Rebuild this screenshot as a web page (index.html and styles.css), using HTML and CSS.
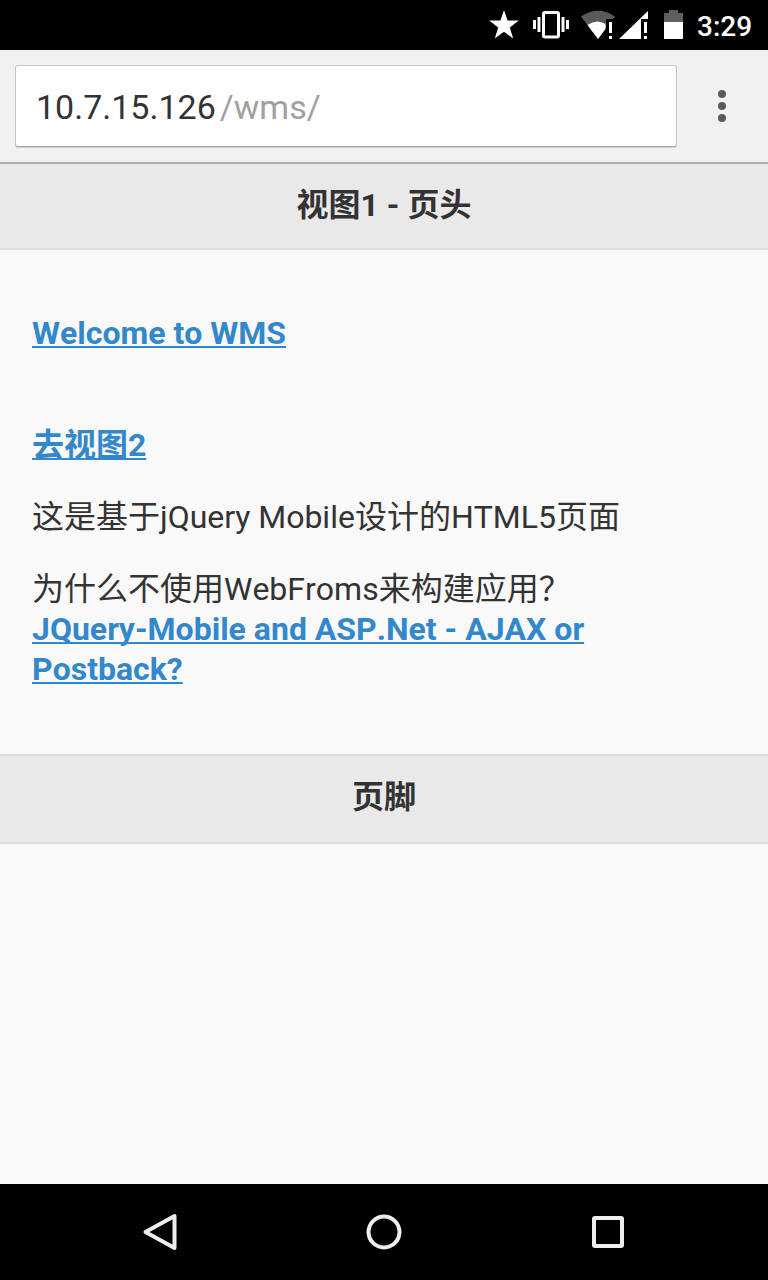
FILE: index.html
```html
<!DOCTYPE html>
<html lang="zh-CN">
<head>
<meta charset="UTF-8">
<meta name="viewport" content="width=device-width, initial-scale=1.0">
<title>WMS</title>
<link rel="stylesheet" href="styles.css">
</head>
<body>

<div class="status-bar">
  <svg class="star" width="30" height="30" viewBox="0 0 30 30">
    <path d="M15 0L18.6 10.6H29.8L20.8 17.4L24.2 28.6L15 21.8L5.8 28.6L9.2 17.4L0.2 10.6H11.4Z" fill="#fff"/>
  </svg>
  <svg class="vibrate" width="36" height="30" viewBox="0 0 36 30">
    <rect x="10.5" y="2.5" width="15" height="24.5" rx="1.5" fill="none" stroke="#fff" stroke-width="3"/>
    <path d="M0 10h3v9H0zM4.5 7h3v15h-3zM28.5 7h3v15h-3zM33 10h3v9h-3z" fill="#fff"/>
  </svg>
  <svg class="wifi" width="34" height="30" viewBox="0 0 34 30">
    <path d="M0 6.500Q17 -5 34 6.500L32 9H25V18L17 29Z" fill="#5a5a5a"/>
    <path d="M6.500 15Q15.500 8.500 24.500 14V19L17 29Z" fill="#fff"/>
    <path d="M28 12h3v11h-3zM28 26h3v3h-3z" fill="#fff"/>
  </svg>
  <svg class="signal" width="30" height="30" viewBox="0 0 30 30">
    <path d="M29 1V9H22V29H0Z" fill="#fff"/>
    <path d="M25 12h3v11h-3zM25 26h3v3h-3z" fill="#fff"/>
  </svg>
  <svg class="battery" width="19" height="30" viewBox="0 0 19 30">
    <path d="M0 3H5V0H14V3H19V12H0Z" fill="#5f5f5f"/>
    <path d="M0 12H19V29H0Z" fill="#fff"/>
  </svg>
  <span class="clock">3:29</span>
</div>

<div class="toolbar">
  <div class="url"><span class="host">10.7.15.126</span><span class="path">/wms/</span></div>
  <svg class="menu" width="8" height="32" viewBox="0 0 8 32">
    <circle cx="4" cy="4" r="4"/>
    <circle cx="4" cy="16" r="4"/>
    <circle cx="4" cy="28" r="4"/>
  </svg>
</div>

<div class="page">
  <div class="header">
    <h1>视图1 - 页头</h1>
  </div>
  <div class="content">
    <h3><a href="#">Welcome to WMS</a></h3>
    <p><a href="#view2">去视图2</a></p>
    <p>这是基于jQuery Mobile设计的HTML5页面</p>
    <p>为什么不使用WebFroms来构建应用？<br>
    <a href="#">JQuery-Mobile and ASP.Net - AJAX or Postback?</a></p>
  </div>
  <div class="footer">
    <h4>页脚</h4>
  </div>
</div>

<div class="nav-bar">
  <svg width="40" height="40" viewBox="0 0 40 40">
    <path d="M34.500 4V36L5.500 20Z"/>
  </svg>
  <svg width="40" height="40" viewBox="0 0 40 40">
    <circle cx="20" cy="20" r="15.500"/>
  </svg>
  <svg width="40" height="40" viewBox="0 0 40 40">
    <rect x="6" y="6" width="28" height="28" rx="1"/>
  </svg>
</div>

</body>
</html>
```
FILE: styles.css
```css
* {
  box-sizing: border-box;
}
body {
  margin: 0;
  width: 768px;
  height: 1280px;
  display: flex;
  flex-direction: column;
  font-family: Roboto, "Noto Sans CJK SC", sans-serif;
  font-size: 32px;
  line-height: 40px;
  font-kerning: none;
  color: #333;
  background: #f9f9f9;
}
svg {
  display: block;
  flex: none;
}

/* android status bar */
.status-bar {
  height: 50px;
  padding: 0 17px 0 0;
  display: flex;
  align-items: center;
  justify-content: flex-end;
  background: #000;
}
.vibrate {
  margin-left: 14px;
}
.wifi {
  margin-left: 12px;
}
.signal {
  margin-left: 4px;
}
.battery {
  margin-left: 15px;
}
.clock {
  margin-left: 14px;
  padding-top: 3px;
  width: 54px;
  color: #fff;
  font-size: 28px;
  font-weight: 500;
  white-space: nowrap;
}

/* browser toolbar */
.toolbar {
  height: 114px;
  padding: 15px 42px 0 15px;
  display: flex;
  justify-content: space-between;
  background: #f1f1f1;
  border-bottom: 2px solid #b0b0b0;
}
.url {
  width: 662px;
  height: 82px;
  padding-left: 20px;
  line-height: 82px;
  font-size: 34px;
  background: #fff;
  border: 1px solid #c4c4c4;
  border-bottom-color: #a4a4a4;
  border-radius: 3px;
  box-shadow: 0 1px 0 #d0d0d0;
}
.path {
  margin-left: 4px;
  color: #a0a0a0;
}
.menu {
  margin-top: 25px;
  fill: #5a5a5a;
}

/* page */
.page {
  flex: 1;
}
.header,
.footer {
  text-align: center;
  background: #e9e9e9;
  border-bottom: 2px solid #ddd;
}
.header {
  height: 86px;
  padding-top: 21px;
}
.footer {
  height: 90px;
  padding-top: 21px;
  border-top: 2px solid #ddd;
}
h1,
h4 {
  margin: 0;
  font-size: 32px;
}
.content {
  height: 504px;
  padding: 63px 32px 0;
}
h3 {
  margin: 0 0 72px;
  font-size: 32px;
}
p {
  margin: 0 0 32px;
}
a {
  color: #38c;
  font-weight: bold;
  text-decoration-thickness: 2px;
  text-decoration-skip-ink: none;
  text-underline-offset: 2px;
}

/* back / home / recents */
.nav-bar {
  height: 96px;
  padding: 0 140px;
  display: flex;
  align-items: center;
  justify-content: space-between;
  background: #000;
}
.nav-bar svg {
  fill: none;
  stroke: #eee;
  stroke-width: 4;
  stroke-linejoin: round;
}
```
